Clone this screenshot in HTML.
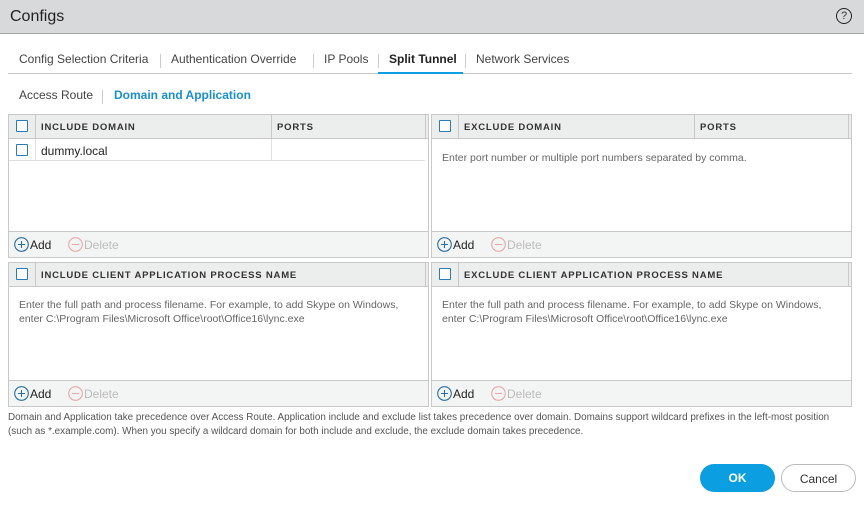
<!DOCTYPE html>
<html><head><style>
*{box-sizing:border-box;margin:0;padding:0}
body{width:864px;height:505px;background:#fff;font-family:"Liberation Sans",sans-serif;color:#333;position:relative;overflow:hidden}
.hdr{position:absolute;left:0;top:0;width:864px;height:34px;background:#d8d9db;border-bottom:1px solid #a2a3a5}
.hdr .t{position:absolute;left:10px;top:8px;font-size:16px;color:#222}
.hdr .q{position:absolute;left:836px;top:8px;width:16px;height:16px;border:1.2px solid #222;border-radius:50%;font-size:11px;text-align:center;line-height:14px}
.tabs{position:absolute;left:8px;top:52px;width:844px;height:22px;border-bottom:1px solid #c8c8c8;font-size:12px;color:#444}
.tabs span{position:absolute;top:0}
.sep{position:absolute;width:1px;height:14px;background:#ccc;top:54px}
.sub{position:absolute;top:88px;font-size:12px}
.panel{position:absolute;border:1px solid #c8c8c8;background:#fff}
.ph{position:absolute;left:0;top:0;right:0;height:24px;background:#eceded;border-bottom:1px solid #c8c8c8;font-size:9.5px;font-weight:bold;letter-spacing:.8px;color:#333}
.ph span{position:absolute;top:7px}
.cb{position:absolute;width:12px;height:12px;border:1.5px solid #2a7ab8;background:#fff;border-radius:1px}
.vl{position:absolute;top:0;width:1px;height:24px;background:#c8c8c8}
.pf{position:absolute;left:0;right:0;bottom:0;height:26px;background:#f3f4f4;border-top:1px solid #c8c8c8;font-size:12px}
.add,.del{position:absolute;top:5px;display:flex;align-items:center;height:15px}
.add{left:5px;color:#222}
.del{left:59px;color:#bbb}
.ic{display:inline-block;width:15px;height:15px;border-radius:50%;margin-right:1px;position:relative}
.ic svg{position:absolute;left:0;top:0}
.hint{position:absolute;font-size:10.5px;color:#666;line-height:14px}
.btn{position:absolute;top:464px;height:28px;border-radius:14px;font-size:12px;text-align:center;line-height:28px}
</style></head><body>
<div class="hdr"><div class="t">Configs</div><div class="q">?</div></div>
<div class="tabs">
<span style="left:11px">Config Selection Criteria</span>
<span style="left:163px">Authentication Override</span>
<span style="left:316px">IP Pools</span>
<span style="left:381px;font-weight:bold;color:#222">Split Tunnel</span>
<span style="left:468px">Network Services</span>
<div style="position:absolute;left:370px;top:20px;width:85px;height:2px;background:#0b9ee0"></div>
</div>
<div class="sep" style="left:160px"></div><div class="sep" style="left:313px"></div><div class="sep" style="left:378px"></div><div class="sep" style="left:465px"></div>
<div class="sub" style="left:19px;color:#444">Access Route</div>
<div class="sep" style="left:102px;top:90px"></div>
<div class="sub" style="left:114px;color:#1a8fcf;font-weight:bold">Domain and Application</div>

<div class="panel" style="left:8px;top:114px;width:421px;height:144px">
<div class="ph"><div class="cb" style="left:7px;top:5px"></div><div class="vl" style="left:26px"></div><span style="left:32px">INCLUDE DOMAIN</span><div class="vl" style="left:262px"></div><span style="left:268px">PORTS</span><div class="vl" style="left:416px"></div></div>
<div style="position:absolute;left:0;top:24px;width:416px;height:22px;border-bottom:1px solid #e0e0e0;font-size:12px">
<div class="cb" style="left:7px;top:5px"></div><div style="position:absolute;left:26px;top:0;width:1px;height:22px;background:#e0e0e0"></div>
<span style="position:absolute;left:32px;top:5px;color:#222">dummy.local</span>
<div style="position:absolute;left:262px;top:0;width:1px;height:22px;background:#e0e0e0"></div></div>
<div class="pf"><span class="add"><span class="ic"><svg width="15" height="15"><circle cx="7.5" cy="7.5" r="6.8" fill="none" stroke="#2a6fa0" stroke-width="1.1"/><path d="M7.5 4v7M4 7.5h7" stroke="#2a6fa0" stroke-width="1.1"/></svg></span>Add</span><span class="del"><span class="ic"><svg width="15" height="15"><circle cx="7.5" cy="7.5" r="6.8" fill="none" stroke="#e8aaaa" stroke-width="1.1"/><path d="M4 7.5h7" stroke="#e8aaaa" stroke-width="1.1"/></svg></span>Delete</span></div>
</div>
<div class="panel" style="left:431px;top:114px;width:421px;height:144px">
<div class="ph"><div class="cb" style="left:7px;top:5px"></div><div class="vl" style="left:26px"></div><span style="left:32px">EXCLUDE DOMAIN</span><div class="vl" style="left:262px"></div><span style="left:268px">PORTS</span><div class="vl" style="left:416px"></div></div>
<div class="hint" style="left:10px;top:36px">Enter port number or multiple port numbers separated by comma.</div>
<div class="pf"><span class="add"><span class="ic"><svg width="15" height="15"><circle cx="7.5" cy="7.5" r="6.8" fill="none" stroke="#2a6fa0" stroke-width="1.1"/><path d="M7.5 4v7M4 7.5h7" stroke="#2a6fa0" stroke-width="1.1"/></svg></span>Add</span><span class="del"><span class="ic"><svg width="15" height="15"><circle cx="7.5" cy="7.5" r="6.8" fill="none" stroke="#e8aaaa" stroke-width="1.1"/><path d="M4 7.5h7" stroke="#e8aaaa" stroke-width="1.1"/></svg></span>Delete</span></div>
</div>
<div class="panel" style="left:8px;top:262px;width:421px;height:145px">
<div class="ph"><div class="cb" style="left:7px;top:5px"></div><div class="vl" style="left:26px"></div><span style="left:32px">INCLUDE CLIENT APPLICATION PROCESS NAME</span><div class="vl" style="left:416px"></div></div>
<div class="hint" style="left:10px;top:35px">Enter the full path and process filename. For example, to add Skype on Windows,<br>enter C:\Program Files\Microsoft Office\root\Office16\lync.exe</div>
<div class="pf"><span class="add"><span class="ic"><svg width="15" height="15"><circle cx="7.5" cy="7.5" r="6.8" fill="none" stroke="#2a6fa0" stroke-width="1.1"/><path d="M7.5 4v7M4 7.5h7" stroke="#2a6fa0" stroke-width="1.1"/></svg></span>Add</span><span class="del"><span class="ic"><svg width="15" height="15"><circle cx="7.5" cy="7.5" r="6.8" fill="none" stroke="#e8aaaa" stroke-width="1.1"/><path d="M4 7.5h7" stroke="#e8aaaa" stroke-width="1.1"/></svg></span>Delete</span></div>
</div>
<div class="panel" style="left:431px;top:262px;width:421px;height:145px">
<div class="ph"><div class="cb" style="left:7px;top:5px"></div><div class="vl" style="left:26px"></div><span style="left:32px">EXCLUDE CLIENT APPLICATION PROCESS NAME</span><div class="vl" style="left:416px"></div></div>
<div class="hint" style="left:10px;top:35px">Enter the full path and process filename. For example, to add Skype on Windows,<br>enter C:\Program Files\Microsoft Office\root\Office16\lync.exe</div>
<div class="pf"><span class="add"><span class="ic"><svg width="15" height="15"><circle cx="7.5" cy="7.5" r="6.8" fill="none" stroke="#2a6fa0" stroke-width="1.1"/><path d="M7.5 4v7M4 7.5h7" stroke="#2a6fa0" stroke-width="1.1"/></svg></span>Add</span><span class="del"><span class="ic"><svg width="15" height="15"><circle cx="7.5" cy="7.5" r="6.8" fill="none" stroke="#e8aaaa" stroke-width="1.1"/><path d="M4 7.5h7" stroke="#e8aaaa" stroke-width="1.1"/></svg></span>Delete</span></div>
</div>
<div class="hint" style="left:8px;top:411px;font-size:9.9px;line-height:14px;color:#555">Domain and Application take precedence over Access Route. Application include and exclude list takes precedence over domain. Domains support wildcard prefixes in the left-most position<br>(such as *.example.com). When you specify a wildcard domain for both include and exclude, the exclude domain takes precedence.</div>
<div class="btn" style="left:700px;width:75px;background:#0b9ee0;color:#fff;font-weight:bold">OK</div>
<div class="btn" style="left:781px;width:75px;border:1px solid #bbb;color:#333">Cancel</div>
</body></html>
